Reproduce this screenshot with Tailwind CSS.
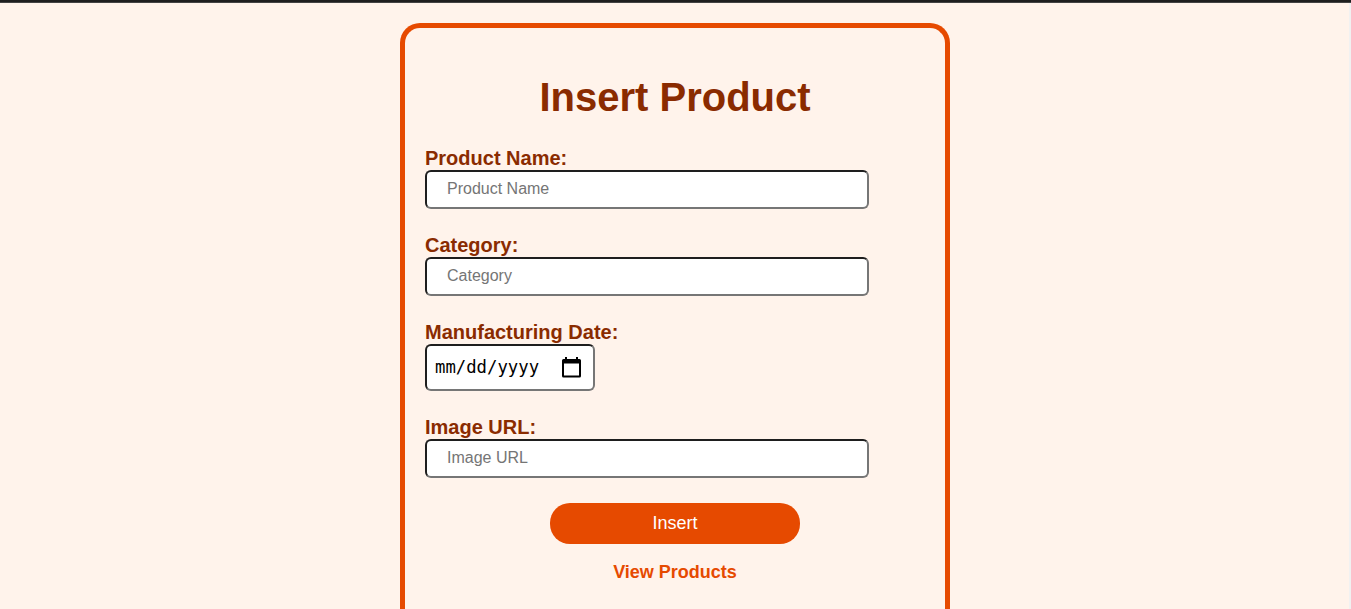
<!DOCTYPE html>
<html lang="en">
<head>
<meta charset="UTF-8">
<title>Insert Product</title>
<script src="https://cdn.jsdelivr.net/npm/@tailwindcss/browser@4"></script>
</head>
<body class="h-[609px] overflow-hidden bg-[#fff3eb] font-['Liberation_Sans',Arial,sans-serif] text-[#8a2b00]">
<div class="flex h-[609px] flex-col">
  <div class="h-[3px] shrink-0 border-b border-[#434343] bg-[#1e1e1e]"></div>
  <div class="flex min-h-0 flex-1 justify-center border-r-2 border-[#f1f1f1] pt-5 pl-px">
    <main class="h-[586px] w-[550px] shrink-0 rounded-t-[20px] border-5 border-b-0 border-[#e64a00] px-5">
      <h1 class="mt-[46px] text-center text-[40px] leading-[46px] font-bold whitespace-nowrap">Insert Product</h1>
      <form class="mt-[27px] flex flex-col items-start text-xl leading-[23px] font-bold">
        <label for="name" class="h-[22px]">Product Name:</label>
        <input id="name" placeholder="Product Name" class="mt-px h-[39px] w-[444px] rounded-md border-2 border-t-[#1e1e1e] border-r-[#767676] border-b-[#767676] border-l-[#1e1e1e] bg-white px-5 pb-[2px] text-base font-normal placeholder:text-[#757575]">
        <label for="category" class="mt-[25px] h-[23px]">Category:</label>
        <input id="category" placeholder="Category" class="h-[39px] w-[444px] rounded-md border-2 border-t-[#1e1e1e] border-r-[#767676] border-b-[#767676] border-l-[#1e1e1e] bg-white px-5 pb-[2px] text-base font-normal placeholder:text-[#757575]">
        <label class="mt-[25px] h-[23px]">Manufacturing Date:</label>
        <div class="flex h-[47px] w-[170px] items-center justify-between rounded-md border-2 border-t-[#1e1e1e] border-r-[#767676] border-b-[#767676] border-l-[#1e1e1e] bg-white pr-3 pl-2 font-normal text-black">
          <span class="font-['DejaVu_Sans_Mono',monospace] text-[17.3px]">mm/dd/yyyy</span>
          <svg class="h-[21px] w-[19px]" viewBox="0 0 19 21" fill="currentColor"><path fill-rule="evenodd" d="M3 0h2v2h9V0h2v2h1.500Q19 2 19 3.500v15.500Q19 20.500 17.500 20.500h-16Q0 20.500 0 19V3.500Q0 2 1.500 2H3ZM2 6.500v12h15v-12Z"/></svg>
        </div>
        <label for="url" class="mt-[25px] h-[23px]">Image URL:</label>
        <input id="url" placeholder="Image URL" class="h-[39px] w-[444px] rounded-md border-2 border-t-[#1e1e1e] border-r-[#767676] border-b-[#767676] border-l-[#1e1e1e] bg-white px-5 pb-[2px] text-base font-normal placeholder:text-[#757575]">
        <button type="button" class="mt-[25px] h-[41px] w-[250px] self-center rounded-[20px] bg-[#e64a00] pb-px text-lg leading-5 font-normal text-white">Insert</button>
        <a href="#" class="mt-[18px] self-center text-lg leading-5 text-[#e64a00]">View Products</a>
      </form>
    </main>
  </div>
</div>
</body>
</html>
